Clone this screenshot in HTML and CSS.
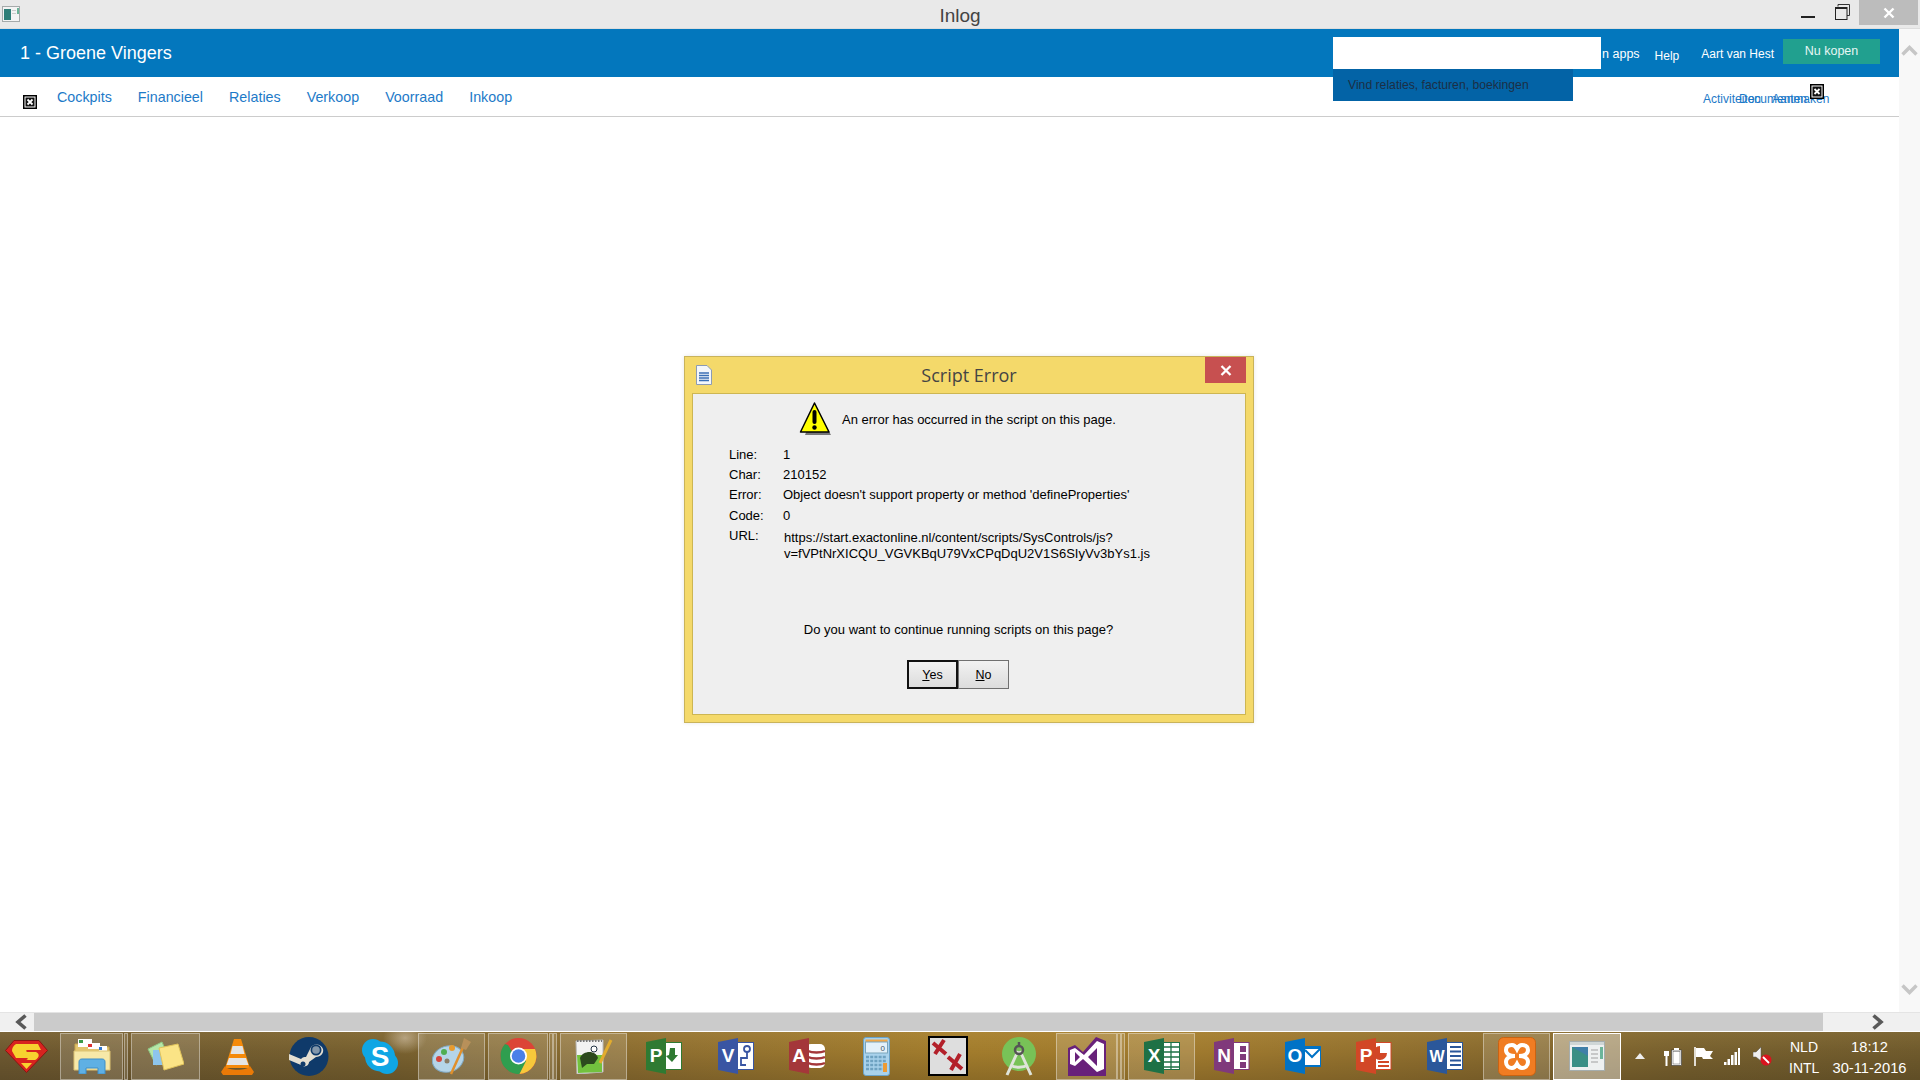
FILE: index.html
```html
<!DOCTYPE html>
<html lang="nl">
<head>
<meta charset="utf-8">
<title>Inlog</title>
<link rel="stylesheet" href="styles.css">
</head>
<body>
<div class="screen">
  <header class="titlebar">
    <svg class="app-ico" width="18" height="16" viewBox="0 0 18 16"><rect x=".5" y=".5" width="17" height="15" fill="#f4f4f4" stroke="#a5aaaa"/><rect x="2" y="3" width="7" height="11" fill="#2f7f78"/><rect x="10" y="4" width="4" height="1" fill="#ccc"/><rect x="10" y="7" width="4" height="1" fill="#ccc"/><rect x="15" y="2" width="2" height="6" fill="#6cb59a"/></svg>
    <div class="title">Inlog</div>
    <div class="winctl">
      <span class="wmin"></span>
      <svg class="wmax" width="15" height="16" viewBox="0 0 15 16"><path d="M3 2.500V.5h11.500v11H12" fill="none" stroke="#333"/><rect x=".5" y="3.500" width="11.500" height="12" fill="#e9e9e9" stroke="#222"/><rect x="1" y="3" width="11" height="2" fill="#222"/></svg>
      <span class="wclose"><svg width="12" height="12" viewBox="0 0 12 12"><path d="M1.500 1.500l9 9M10.500 1.500l-9 9" stroke="#fff" stroke-width="2.400"/></svg></span>
    </div>
  </header>

  <div class="browser">
    <div class="page-col">
      <div class="bluebar">
        <div class="company">1 - Groene Vingers</div>
        <div class="topright">
          <div class="apps-clip">n apps</div>
          <div class="help">Help</div>
          <div class="user">Aart van Hest</div>
          <div class="buy">Nu kopen</div>
        </div>
      </div>
      <nav class="subnav">
        <span class="broken left"><svg width="14" height="14" viewBox="0 0 14 14"><rect x=".75" y=".75" width="12.500" height="12.500" fill="#fff" stroke="#000" stroke-width="1.500"/><rect x="2.500" y="2.500" width="9" height="9" fill="#111"/><path d="M4.500 4.500l5 5M9.500 4.500l-5 5" stroke="#fff" stroke-width="1.800"/></svg></span>
        <a>Cockpits</a><a>Financieel</a><a>Relaties</a><a>Verkoop</a><a>Voorraad</a><a>Inkoop</a>
        <div class="stack">
          <a class="s1">Activiteiten</a><a class="s2">Documenten</a><a class="s3">Aanmaken</a>
          <span class="broken right"><svg width="14" height="15" viewBox="0 0 14 15"><rect x=".75" y=".75" width="12.500" height="13.500" fill="#fff" stroke="#000" stroke-width="1.500"/><rect x="2.500" y="2.500" width="9" height="10" fill="#111"/><path d="M4.500 5l5 5M9.500 5l-5 5" stroke="#fff" stroke-width="1.800"/></svg></span>
        </div>
      </nav>
      <main class="content"></main>
      <div class="search">
        <div class="search-input"></div>
        <div class="search-hint">Vind relaties, facturen, boekingen</div>
      </div>
    </div>
    <aside class="vscroll">
      <svg width="17" height="11" viewBox="0 0 17 11"><path d="M1.500 9.500l7-7 7 7" fill="none" stroke="#c6c6c6" stroke-width="3.400"/></svg>
      <svg width="17" height="11" viewBox="0 0 17 11"><path d="M1.500 1.500l7 7 7-7" fill="none" stroke="#c6c6c6" stroke-width="3.400"/></svg>
    </aside>
  </div>

  <div class="hscroll">
    <div class="harrow"><svg width="14" height="16" viewBox="0 0 14 16"><path d="M11.500 1.500L4 8l7.500 6.500" fill="none" stroke="#595959" stroke-width="3.600"/></svg></div>
    <div class="hthumb"></div>
    <div class="harrow right"><svg width="14" height="16" viewBox="0 0 14 16"><path d="M2.500 1.500L10 8l-7.500 6.500" fill="none" stroke="#595959" stroke-width="3.600"/></svg></div>
  </div>

  <footer class="taskbar">
    <div class="tasks">
      <span class="task t-super"><svg width="43" height="33" viewBox="0 0 43 33"><path d="M9 .5h25l8.500 10L21.500 32.500.5 10.500z" fill="#d8231f" stroke="#8a1512"/><path d="M11 4h22l3 6H23c-3 0-2 2 0 2h8c5 2 2 7-1 8H20c3 0 4-2 1-2H11L7 11c0-3 1-5 4-7z" fill="#f7d22f"/><path d="M16 23h11l-5.500 6z" fill="#f7d22f"/></svg></span>
      <span class="task run t-folder"><svg width="38" height="36" viewBox="0 0 38 36"><path d="M2 6h14l2 3h18v22H2z" fill="#e3c56f" stroke="#c9a84f"/><rect x="5" y="1" width="14" height="8" fill="#fff"/><rect x="6" y="2" width="4" height="3" fill="#3a9b4a"/><rect x="15" y="5" width="12" height="6" fill="#fff"/><rect x="15" y="6" width="4" height="3" fill="#d33"/><rect x="26" y="8" width="8" height="5" fill="#fff"/><rect x="26" y="9" width="3" height="3" fill="#37c"/><path d="M1 13h36v19H1z" fill="#f7e8a8" stroke="#dcc272"/><path d="M6 36V24c0-2 1-3 3-3h20c2 0 3 1 3 3v12h-7v-6H13v6z" fill="#5fb0e4" stroke="#3e8ec7"/></svg></span><span class="grip g-a"></span>
      <span class="task run t-notes"><svg width="37" height="30" viewBox="0 0 37 30"><path d="M1 8L15 1l7 16-13 7z" fill="#b6e6a8" stroke="#8cc782"/><path d="M6 9h14v15H6z" fill="#8ec5ec"/><path d="M12 7l19-4 6 20-20 6z" fill="#fbe486" stroke="#e0c35b"/></svg></span>
      <span class="task t-vlc"><svg width="33" height="37" viewBox="0 0 33 37"><path d="M13 1h7l9 29H4z" fill="#f58a0b"/><path d="M11.500 8h10l2 8h-14zM8 20h17l2.500 7h-22z" fill="#e4e4e4"/><path d="M4 28l-4 6 2 3h29l2-3-4-6c-2 5-23 5-25 0z" fill="#ea7a07"/></svg></span>
      <span class="task t-steam"><svg width="40" height="39" viewBox="0 0 40 39"><circle cx="20" cy="19.500" r="19.500" fill="#0f3a6a"/><path d="M0 23l12 5c3 3 8 1 8-3l7-5c5 0 8-4 7-8-2-6-11-6-13 0l-4 8c-2 0-3 0-5 2L0 17z" fill="#e4dfd2"/><circle cx="27" cy="13" r="5.500" fill="#0f3a6a"/><circle cx="27" cy="13" r="3.800" fill="#8397ab"/><circle cx="14" cy="27" r="2.500" fill="#0f3a6a"/></svg></span>
      <span class="task t-skype"><svg width="36" height="35" viewBox="0 0 36 35"><circle cx="11" cy="11" r="11" fill="#0fa6e4"/><circle cx="25" cy="24" r="11" fill="#0fa6e4"/><circle cx="18" cy="17.500" r="15" fill="#0fa6e4"/><text x="18" y="27" class="sk">S</text></svg></span>
      <span class="task run t-paint"><svg width="40" height="38" viewBox="0 0 40 38"><ellipse cx="16" cy="22" rx="16" ry="13" fill="#b5d5e8" stroke="#7fa9c4" transform="rotate(-18 16 22)"/><circle cx="7" cy="22" r="3" fill="#d6453d"/><circle cx="12" cy="15" r="3" fill="#4fae52"/><circle cx="20" cy="11" r="3" fill="#e89b2e"/><circle cx="15" cy="24" r="2.500" fill="#8a7d66"/><path d="M32 8L19 37" stroke="#e0902c" stroke-width="2.500"/><path d="M29 11l3-10 7 4-5 8z" fill="#b8905a"/></svg></span>
      <span class="task run t-chrome"><svg width="37" height="36" viewBox="0 0 37 36"><circle cx="18.500" cy="18" r="18" fill="#dc4437"/><path d="M.5 18a18 18 0 0 0 19 18l8-13H18L8 7l-3-1A18 18 0 0 0 .5 18z" fill="#2f9e4f"/><path d="M19.500 36A18 18 0 0 0 35 11H18l8 12z" fill="#f7c83b"/><circle cx="18.500" cy="18" r="8.500" fill="#fff"/><circle cx="18.500" cy="18" r="6.800" fill="#4a80e8"/></svg></span><span class="grip g-b"></span><span class="grip g2"></span>
      <span class="task run t-npp"><svg width="38" height="35" viewBox="0 0 38 35"><path d="M1 2l27-1v32l-26 2z" fill="#f2f2f2" stroke="#bbb"/><path d="M2 2h25" stroke="#777" stroke-width="2" stroke-dasharray="1.500 1.500"/><path d="M2 16h25v17L3 34z" fill="#72c23e"/><path d="M5 19c3-8 16-8 18 0l-4 6h-7l-5 4z" fill="#2c4a1e"/><circle cx="19" cy="10" r="3" fill="#fff" stroke="#234"/><path d="M36 1L25 24" stroke="#e2ac2e" stroke-width="3"/></svg></span>
      <span class="task t-proj"><svg width="36" height="36" viewBox="0 0 36 36"><rect x="17" y="4.500" width="18.500" height="27" fill="#fff" stroke="#2f7a32"/><path d="M24 10h5v7h3l-6 7-6-6 3-1z" fill="#2f7a32"/><path d="M0 4L20 0v36L0 32z" fill="#2f7a32"/><text x="10" y="24" class="off-l">P</text></svg></span>
      <span class="task t-visio"><svg width="36" height="36" viewBox="0 0 36 36"><rect x="17" y="4.500" width="18.500" height="27" fill="#fff" stroke="#3955a3"/><circle cx="29" cy="11" r="3" fill="none" stroke="#3955a3" stroke-width="1.800"/><path d="M29 14v6h-6v7h5" fill="none" stroke="#3955a3" stroke-width="1.800"/><path d="M0 4L20 0v36L0 32z" fill="#3955a3"/><text x="10" y="24" class="off-l">V</text></svg></span>
      <span class="task t-access"><svg width="36" height="36" viewBox="0 0 36 36"><rect x="17" y="6" width="19" height="24" rx="5" fill="#fff"/><path d="M19 13c4 2 13 2 17 0M19 19c4 2 13 2 17 0M19 25c4 2 13 2 17 0" fill="none" stroke="#a4373a" stroke-width="2.400"/><path d="M0 4L20 0v36L0 32z" fill="#a4373a"/><text x="10" y="24" class="off-l">A</text></svg></span>
      <span class="task t-calc"><svg width="27" height="39" viewBox="0 0 27 39"><rect x=".5" y=".5" width="26" height="38" rx="2.500" fill="#a9d2ec" stroke="#6aa3c8"/><rect x="2.500" y="2.500" width="22" height="2.500" fill="#f0a84a"/><rect x="2.500" y="5" width="22" height="11" fill="#e3f1fa" stroke="#7aa5bb"/><text x="22" y="14" class="calc-n">0</text><path d="M3 20h21M3 24h21M3 28h21M3 32h21" stroke="#6ea2c1" stroke-width="2.600" stroke-dasharray="3 1.200"/><rect x="20" y="26" width="4" height="9" fill="#ee9b33"/></svg></span>
      <span class="task t-xapp"><svg width="40" height="40" viewBox="0 0 40 40"><rect x="1" y="1" width="38" height="38" fill="#dedede" stroke="#000" stroke-width="2"/><path d="M5 7l13 11M16 4L7 18M20 21l14 12M32 18L23 34" stroke="#b3202a" stroke-width="4"/></svg></span>
      <span class="task t-android"><svg width="34" height="39" viewBox="0 0 34 39"><circle cx="17" cy="17" r="17" fill="#78c257"/><path d="M5 38L16 14M29 38L18 14M8 28c5 3 13 3 18 0" fill="none" stroke="#dfe4da" stroke-width="3"/><circle cx="17" cy="13" r="4" fill="none" stroke="#555" stroke-width="2.500"/><path d="M17 5v4" stroke="#555" stroke-width="2.500"/></svg></span>
      <span class="task run t-vs"><svg width="38" height="39" viewBox="0 0 38 39"><path d="M0 11l7-3 8 7L28 0l10 4v35H0z" fill="#68217a"/><path d="M2 13l5-2 9 7L29 4l7 3v25l-7 3-14-13-8 7-5-2z" fill="#fff"/><path d="M7 15v10l5-5zM29 11l-9 9 9 9z" fill="#68217a"/></svg></span><span class="grip g-c"></span><span class="grip g2"></span>
      <span class="task run t-excel"><svg width="36" height="36" viewBox="0 0 36 36"><rect x="17" y="4.500" width="18.500" height="27" fill="#fff" stroke="#1e7145"/><path d="M20 9h15M20 14h15M20 19h15M20 24h15M20 29h15M27 5v26" stroke="#1e7145" stroke-width="1.300"/><path d="M0 4L20 0v36L0 32z" fill="#1e7145"/><text x="10" y="24" class="off-l">X</text></svg></span>
      <span class="task t-one"><svg width="36" height="36" viewBox="0 0 36 36"><rect x="17" y="4.500" width="18" height="27" fill="#fff" stroke="#80397b"/><path d="M29 8v6M29 16v6M29 24v6" stroke="#80397b" stroke-width="6"/><path d="M0 4L20 0v36L0 32z" fill="#80397b"/><text x="10" y="24" class="off-l">N</text></svg></span>
      <span class="task t-out"><svg width="36" height="36" viewBox="0 0 36 36"><rect x="17" y="8" width="19" height="21" fill="#0072c6"/><rect x="20" y="11" width="15" height="16" fill="#fff"/><path d="M20 12l7 7 8-8" fill="none" stroke="#0072c6" stroke-width="2"/><path d="M0 4L20 0v36L0 32z" fill="#0072c6"/><text x="10" y="24" class="off-l">O</text></svg></span>
      <span class="task t-ppt"><svg width="36" height="36" viewBox="0 0 36 36"><rect x="17" y="4.500" width="18" height="27" fill="#fff" stroke="#d24726"/><path d="M24 8a7 7 0 1 0 7 7h-7z" fill="#d24726"/><path d="M22 24h11M22 28h11" stroke="#d24726" stroke-width="2"/><path d="M0 4L20 0v36L0 32z" fill="#d24726"/><text x="10" y="24" class="off-l">P</text></svg></span>
      <span class="task t-word"><svg width="36" height="36" viewBox="0 0 36 36"><rect x="17" y="4.500" width="18.500" height="27" fill="#fff" stroke="#2b579a"/><path d="M23 9h11M23 13.500h11M23 18h11M23 22.500h11M23 27h11" stroke="#2b579a" stroke-width="2"/><path d="M0 4L20 0v36L0 32z" fill="#2b579a"/><text x="10" y="24" class="off-l w">W</text></svg></span>
      <span class="task run t-xampp"><svg width="38" height="39" viewBox="0 0 38 39"><rect x=".5" y=".5" width="37" height="38" rx="5" fill="#f07c22" stroke="#c96312"/><path d="M17 19c-5 0-9-2-9-6s3-5 6-5c3 0 4 2 5 4 1-2 2-4 5-4s6 1 6 5-4 6-9 6c5 0 9 2 9 6s-3 6-6 6-4-2-5-4c-1 2-2 4-5 4s-6-2-6-6 4-6 9-6z" fill="none" stroke="#fff" stroke-width="4"/></svg></span>
      <span class="task active t-ie"><svg width="36" height="30" viewBox="0 0 36 30"><rect x=".5" y=".5" width="35" height="29" fill="#eef0f0" stroke="#a5adad"/><rect x="1" y="1" width="34" height="3" fill="#cfd6d6"/><rect x="3" y="6" width="16" height="20" fill="#3a8f85"/><path d="M3 6h16v9z" fill="#3f7fa8"/><path d="M22 9h7M22 13h7M22 17h7M22 21h7" stroke="#bbb" stroke-width="1.500"/><rect x="31" y="6" width="3" height="12" fill="#6cb59a"/></svg></span>
    </div>
    <div class="tray">
      <span class="tri"></span>
      <svg class="tr-bat" width="18" height="19" viewBox="0 0 18 19"><rect x="7.500" y="3" width="10" height="15.500" fill="#fff" stroke="#333" stroke-width=".6"/><rect x="9" y="4.500" width="7" height="12.500" fill="#fff" stroke="#555" stroke-width=".5"/><rect x="10" y="1" width="5" height="2" fill="#fff"/><path d="M1 0v4M4 0v4M0 4h5v5H3.500v10h-2V9H0z" fill="#fff"/></svg>
      <svg class="tr-flag" width="19" height="19" viewBox="0 0 19 19"><path d="M1 0v19" stroke="#fff" stroke-width="1.600"/><path d="M2 1h8l2 3h7l-3 5 3 3H9l-1-2H2z" fill="#fff"/></svg>
      <svg class="tr-sig" width="16" height="17" viewBox="0 0 16 17"><path d="M0 14h2.500v3H0zM3.500 11H6v6H3.500zM7 7h2.500v10H7zM10.500 4H13v13h-2.500zM14 0h2v17h-2z" fill="#fff"/></svg>
      <svg class="tr-snd" width="19" height="20" viewBox="0 0 19 20"><path d="M0 6h3l5-5v14l-5-4H0z" fill="#f0f0f0" stroke="#555" stroke-width=".5"/><circle cx="13" cy="14" r="5.500" fill="#d9141e"/><path d="M10 11l6 6" stroke="#fff" stroke-width="1.800"/></svg>
      <div class="lang"><span>NLD</span><span>INTL</span></div>
      <div class="clock"><span>18:12</span><span>30-11-2016</span></div>
    </div>
  </footer>

  <section class="dialog">
    <div class="dlg-title">
      <svg class="dlg-ico" width="16" height="20" viewBox="0 0 16 20"><path d="M.5.500h10.500l4.500 4.500v14.500H.500z" fill="#f4f7fb" stroke="#8b9bb5"/><path d="M3 8h10M3 10.500h10M3 13h10M3 15.500h10" stroke="#3b6fb5" stroke-width="1.500"/></svg>
      <h1>Script Error</h1>
      <span class="dlg-close"><svg width="12" height="11" viewBox="0 0 12 11"><path d="M1.500 1l9 9M10.500 1l-9 9" stroke="#fff" stroke-width="2.300"/></svg></span>
    </div>
    <div class="dlg-body">
      <div class="dlg-head">
        <svg width="34" height="36" viewBox="0 0 34 36"><path d="M17 6l15 28H6z" fill="#777"/><path d="M15.500 2L30 31H1.500z" fill="#ffff00" stroke="#000" stroke-width="1.500" stroke-linejoin="round"/><path d="M15.500 11v10" stroke="#000" stroke-width="4" stroke-linecap="round"/><circle cx="15.500" cy="26.500" r="2.200" fill="#000"/></svg>
        <p>An error has occurred in the script on this page.</p>
      </div>
      <dl class="details">
        <dt>Line:</dt><dd>1</dd>
        <dt>Char:</dt><dd>210152</dd>
        <dt>Error:</dt><dd>Object doesn't support property or method 'defineProperties'</dd>
        <dt>Code:</dt><dd>0</dd>
        <dt>URL:</dt><dd class="url">https://start.exactonline.nl/content/scripts/SysControls/js?<br>v=fVPtNrXICQU_VGVKBqU79VxCPqDqU2V1S6SIyVv3bYs1.js</dd>
      </dl>
      <p class="question">Do you want to continue running scripts on this page?</p>
      <div class="buttons">
        <button class="btn default"><u>Y</u>es</button><button class="btn"><u>N</u>o</button>
      </div>
    </div>
  </section>
</div>
</body>
</html>
```

FILE: styles.css
```css
* { box-sizing: border-box; }
html, body { margin: 0; padding: 0; height: 100%; overflow: hidden; }
body { font-family: "Liberation Sans", Arial, sans-serif; background: #fff; }
.screen { position: relative; width: 1920px; height: 1080px; display: flex; flex-direction: column; }

.titlebar { height: 29px; flex: 0 0 29px; background: #e9e9e9; display: flex; align-items: flex-start; border-bottom: 1px solid #ddd; position: relative; }
.app-ico { margin: 6px 0 0 2px; }
.title { position: absolute; left: 0; right: 0; top: 5px; text-align: center; font-size: 19px; color: #444; line-height: 21px; }
.winctl { margin-left: auto; display: flex; align-items: flex-start; margin-right: 2px; }
.wmin { width: 14px; height: 2px; background: #222; margin: 16px 0 0 0; }
.wmax { margin: 4px 0 0 20px; }
.wclose { width: 59px; height: 25px; background: #bcbcbc; margin-left: 9px; display: flex; align-items: center; justify-content: center; }

.browser { flex: 1; display: flex; min-height: 0; }
.page-col { flex: 1; display: flex; flex-direction: column; position: relative; min-width: 0; }
.bluebar { height: 48px; flex: 0 0 48px; background: #0377bd; display: flex; align-items: center; padding-left: 20px; color: #fff; }
.company { font-size: 18px; }
.topright { margin-left: auto; display: flex; align-items: center; font-size: 12px; padding-right: 19px; }
.apps-clip { margin-right: 15px; padding-top: 2px; font-size: 12.500px; }
.help { margin-right: 22px; padding-top: 5px; }
.user { margin-right: 9px; padding-top: 2px; }
.buy { width: 97px; height: 25px; margin-top: -4px; background: #21a08f; font-size: 12.500px; display: flex; align-items: center; justify-content: center; color: #e6f6f4; }

.subnav { height: 40px; flex: 0 0 40px; background: #fff; border-bottom: 1px solid #ccc; display: flex; align-items: center; padding-left: 23px; position: relative; font-size: 14.300px; }
.subnav a { color: #1d7ac8; margin-right: 26px; }
.broken { display: flex; }
.broken.left { margin: 11px 20px 0 0; }
.stack { position: absolute; left: 0; top: 0; bottom: 0; right: 0; font-size: 12px; }
.stack a { position: absolute; top: 15px; margin: 0; white-space: nowrap; }
.s1 { left: 1703px; }
.s2 { left: 1739px; }
.s3 { left: 1772px; }
.broken.right { position: absolute; left: 1810px; top: 7px; }
.content { flex: 1; background: #fff; }

.search { position: absolute; left: 1333px; top: 8px; width: 268px; }
.search-input { height: 32px; background: #fff; }
.search-hint { width: 240px; height: 32px; background: #0363a6; color: #1c2f45; font-size: 12.200px; line-height: 32px; padding-left: 15px; }

.vscroll { width: 21px; flex: 0 0 21px; background: #f8f8f8; display: flex; flex-direction: column; justify-content: space-between; align-items: center; padding: 16px 0 17px; }

.hscroll { height: 20px; flex: 0 0 20px; background: #cbcbcb; display: flex; border-top: 1px solid #e4e4e4; border-bottom: 1px solid #fff; }
.harrow { width: 34px; background: #f0f0f0; display: flex; align-items: center; justify-content: center; padding-left: 8px; }
.harrow.right { width: 97px; padding-left: 12px; }
.hthumb { flex: 1; }

.taskbar { height: 48px; flex: 0 0 48px; background:
    radial-gradient(ellipse 22px 16px at 405px 6px, rgba(225,210,190,.55), rgba(225,210,190,0) 100%),
    linear-gradient(180deg, rgba(255,215,130,.10) 0%, rgba(0,0,0,0) 40%, rgba(0,0,0,.14) 100%),
    linear-gradient(90deg, #6d5830 0%, #77602f 20%, #8f6f30 35%, #a27c2c 50%, #a07a2e 62%, #8d6d2e 75%, #77602e 88%, #6f5a2c 100%);
  display: flex; align-items: center; overflow: hidden; }
.tasks { display: flex; align-items: center; height: 100%; flex: none; }
.task { height: 48px; display: flex; align-items: center; justify-content: center; flex: none; overflow: hidden; }
.run { background: rgba(255,255,255,.15); border: 1px solid rgba(255,255,255,.38); height: 47px; }
.active { background: rgba(255,255,255,.42); border: 1px solid #fff; height: 47px; }
.grip { width: 4px; height: 47px; flex: none; background: rgba(255,255,255,.12); border: 1px solid rgba(255,255,255,.38); }
.g-a { margin-left: 1px; }
.g-b { margin-left: 1px; }
.g-c { margin-left: 0; }
.g2 { margin-left: 0; }
.t-super { width: 52px; }
.t-folder { width: 63px; margin-left: 8px; }
.t-notes { width: 69px; margin-left: 3px; }
.t-vlc { width: 71px; margin-left: 2px; }
.t-steam { width: 71px; }
.t-skype { width: 72px; }
.t-paint { width: 67px; margin-left: 2px; }
.t-chrome { width: 60px; margin-left: 3px; }
.t-npp { width: 67px; margin-left: 3px; }
.t-proj { width: 72px; margin-left: 1px; }
.t-visio { width: 71px; }
.t-access { width: 71px; }
.t-calc { width: 69px; }
.t-xapp { width: 74px; }
.t-android { width: 68px; }
.t-vs { width: 61px; margin-left: 3px; }
.t-excel { width: 67px; margin-left: 3px; }
.t-one { width: 73px; }
.t-out { width: 70px; }
.t-ppt { width: 71px; }
.t-word { width: 71px; }
.t-xampp { width: 67px; margin-left: 3px; }
.t-ie { width: 68px; margin-left: 3px; }
.sk { font: bold 28px "Liberation Sans", sans-serif; fill: #fff; text-anchor: middle; }
.off-l { font: bold 19px "Liberation Sans", sans-serif; fill: #fff; text-anchor: middle; }
.off-l.w { font-size: 16px; }
.calc-n { font: 8px "Liberation Sans", sans-serif; fill: #456; text-anchor: end; }

.tray { display: flex; align-items: center; height: 100%; color: #fff; font-size: 14px; }
.tri { width: 0; height: 0; border-left: 5px solid transparent; border-right: 5px solid transparent; border-bottom: 6px solid #eee; margin-left: 14px; }
.tr-bat { margin-left: 19px; }
.tr-flag { margin-left: 12px; }
.tr-sig { margin-left: 11px; }
.tr-snd { margin-left: 13px; }
.lang { display: flex; flex-direction: column; align-items: flex-start; margin-left: 17px; width: 43px; line-height: 21px; padding-top: 3px; }
.lang span:first-child { padding-left: 1px; }
.clock { display: flex; flex-direction: column; align-items: center; width: 75px; line-height: 21px; font-size: 14.700px; padding-top: 3px; }

.dialog { position: absolute; left: 684px; top: 356px; width: 570px; height: 367px; background: #f4d96a; border: 1px solid #c9b35a; box-shadow: 0 0 4px rgba(0,0,0,.1); padding: 0 7px 7px; display: flex; flex-direction: column; }
.dlg-title { height: 36px; flex: 0 0 36px; position: relative; display: flex; align-items: center; justify-content: center; }
.dlg-title h1 { margin: 0; font-weight: 400; font-size: 18px; font-family: "Open Sans", sans-serif; color: #444; }
.dlg-ico { position: absolute; left: 4px; top: 8px; }
.dlg-close { position: absolute; right: 0; top: 0; width: 41px; height: 26px; background: #c75050; display: flex; align-items: center; justify-content: center; }
.dlg-body { flex: 1; background: #efefef; border: 1px solid #cdb652; font-size: 13px; color: #000; position: relative; }
.dlg-head { display: flex; align-items: center; padding: 7px 0 0 106px; }
.dlg-head p { margin: 0 0 0 9px; }
.details { display: grid; grid-template-columns: 54px 1fr; margin: 0; padding: 8px 0 0 36px; line-height: 20.200px; }
.details dt, .details dd { margin: 0; }
.details dd.url { line-height: 16px; margin-left: 1px; padding-top: 4px; }
.question { margin: 0; position: absolute; left: 0; right: 21px; top: 228px; text-align: center; }
.buttons { position: absolute; left: 214px; top: 266px; display: flex; }
.btn { width: 51px; height: 29px; margin: 0; padding: 0; background: linear-gradient(180deg, #f2f2f2, #dcdcdc); border: 1px solid #707070; font: 12.500px "Liberation Sans", sans-serif; color: #000; }
.btn.default { border: 2px solid #111; }
```
